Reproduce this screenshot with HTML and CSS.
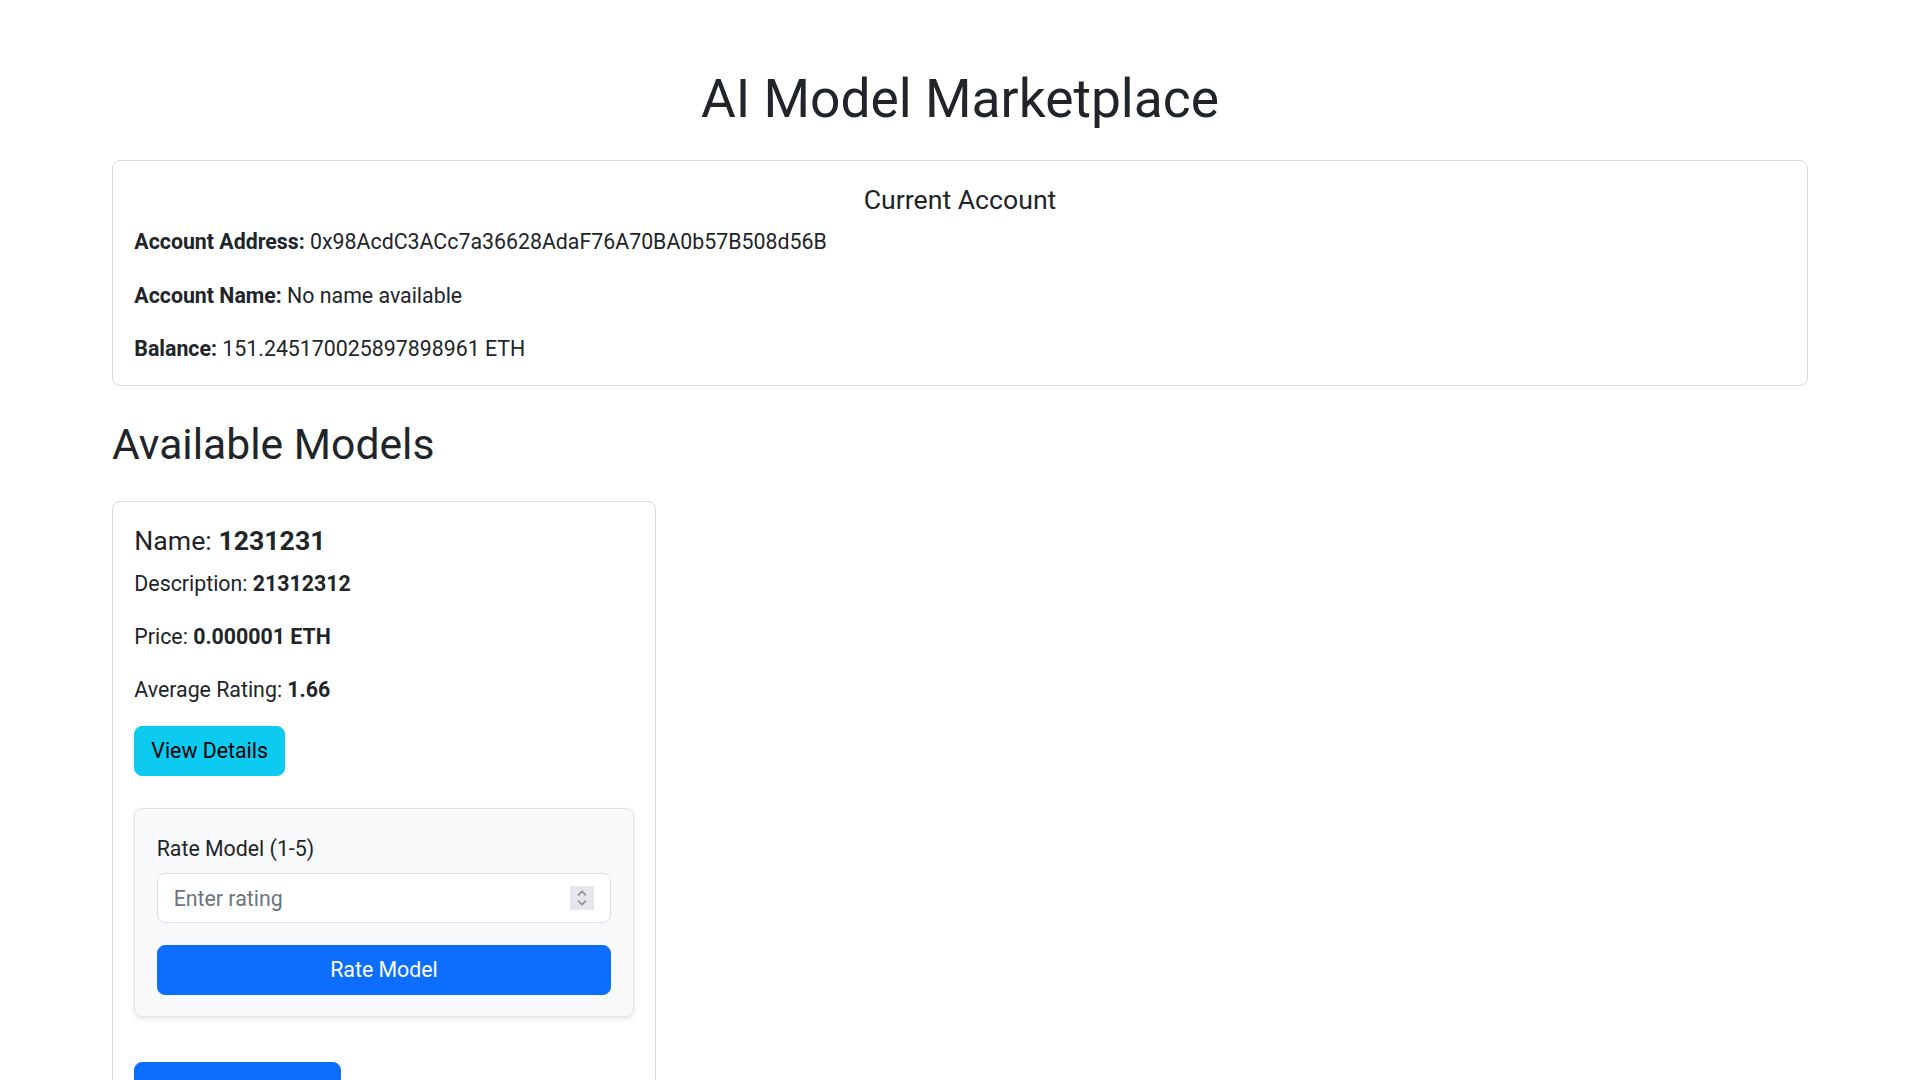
FILE: index.html
```html
<!DOCTYPE html>
<html lang="en">
<head>
<meta charset="utf-8">
<title>AI Model Marketplace</title>
<link rel="stylesheet" href="styles.css">
</head>
<body>
<div class="container">
  <h1 class="page-title">AI Model Marketplace</h1>

  <div class="card">
    <div class="card-body">
      <h5 class="card-title center">Current Account</h5>
      <p class="card-text"><strong>Account Address:</strong> 0x98AcdC3ACc7a36628AdaF76A70BA0b57B508d56B</p>
      <p class="card-text"><strong>Account Name:</strong> No name available</p>
      <p class="card-text"><strong>Balance:</strong> 151.245170025897898961 ETH</p>
    </div>
  </div>

  <h2 class="section-title">Available Models</h2>

  <div class="models">
    <div class="card model-card">
      <div class="card-body">
        <h5 class="card-title">Name: <strong>1231231</strong></h5>
        <p class="card-text">Description: <strong>21312312</strong></p>
        <p class="card-text">Price: <strong>0.000001 ETH</strong></p>
        <p class="card-text rating-line">Average Rating: <strong>1.66</strong></p>
        <button class="btn btn-info">View Details</button>

        <div class="rate-box">
          <label class="form-label" for="rating">Rate Model (1-5)</label>
          <div class="form-control">
            <input id="rating" class="rating-input" type="number" min="1" max="5" placeholder="Enter rating">
            <span class="spinner" aria-hidden="true">
              <svg width="12" height="18" viewBox="0 0 12 18"><path d="M2 6.5 L6 2.5 L10 6.5 M2 11.5 L6 15.5 L10 11.5" fill="none" stroke="#8c8c94" stroke-width="1.6"/></svg>
            </span>
          </div>
          <button class="btn btn-primary btn-block">Rate Model</button>
        </div>

        <button class="btn btn-primary btn-buy">Purchase Model</button>
      </div>
    </div>
  </div>
</div>
</body>
</html>
```
FILE: styles.css
```css
* { box-sizing: border-box; }

body {
  margin: 0;
  font-family: Roboto, "Noto Sans", sans-serif;
  font-size: 21.33px;
  line-height: 32px;
  color: #212529;
  background: #fff;
}

.container {
  width: 1696px;
  margin: 0 auto;
}

.page-title {
  margin: 67px 0 29px;
  font-size: 53.33px;
  line-height: 64px;
  font-weight: 400;
  text-align: center;
}

.card {
  border: 1px solid #dcdcdc;
  border-radius: 8px;
  background: #fff;
}

.card-body {
  padding: 22.8px 21.33px 19.86px;
}

.card-title {
  margin: 0 0 10.67px;
  font-size: 26.67px;
  line-height: 32px;
  font-weight: 400;
}

.center { text-align: center; }

.card-text {
  margin: 0 0 21.33px;
}

.card-text:last-child { margin-bottom: 0; }

.rating-line { margin-bottom: 19.86px; }

strong { font-weight: 700; }

.section-title {
  margin: 33px 0 31px;
  font-size: 42.67px;
  line-height: 51.2px;
  font-weight: 400;
}

.models {
  display: grid;
  grid-template-columns: repeat(3, 1fr);
  gap: 32px;
}

.btn {
  display: inline-block;
  padding: 8px 16px;
  font-family: inherit;
  font-size: 21.33px;
  line-height: 32px;
  border: 1px solid transparent;
  border-radius: 8px;
  cursor: pointer;
}

.btn-info {
  background: #0dcaf0;
  border-color: #0dcaf0;
  color: #000;
}

.btn-primary {
  background: #0d6efd;
  border-color: #0d6efd;
  color: #fff;
}

.btn-block {
  display: block;
  width: 100%;
  margin-top: 22px;
}

.btn-buy {
  margin-top: 45px;
  width: 207px;
  padding-top: 13px;
  padding-bottom: 3px;
}

.rate-box {
  margin-top: 32px;
  padding: 23.5px 21.33px 21.33px;
  background: #f8f9fa;
  border: 1px solid #e1e3e5;
  border-radius: 8px;
  box-shadow: 0 2.67px 5.33px rgba(0, 0, 0, 0.075);
}

.form-label {
  display: block;
  margin-bottom: 8.5px;
}

.form-control {
  display: flex;
  align-items: center;
  height: 50px;
  padding: 0 16px;
  background: #fff;
  border: 1px solid #dee2e6;
  border-radius: 8px;
}

.rating-input {
  flex: 1;
  min-width: 0;
  border: 0;
  outline: 0;
  padding: 2px 0 0;
  font-family: inherit;
  font-size: 21.33px;
  line-height: 32px;
  color: #212529;
  background: transparent;
  -moz-appearance: textfield;
}

.rating-input::placeholder { color: #6c757d; }

.rating-input::-webkit-inner-spin-button,
.rating-input::-webkit-outer-spin-button {
  -webkit-appearance: none;
  margin: 0;
}

.spinner {
  display: flex;
  align-items: center;
  justify-content: center;
  width: 24px;
  height: 24px;
  background: #e6e5eb;
}
```
